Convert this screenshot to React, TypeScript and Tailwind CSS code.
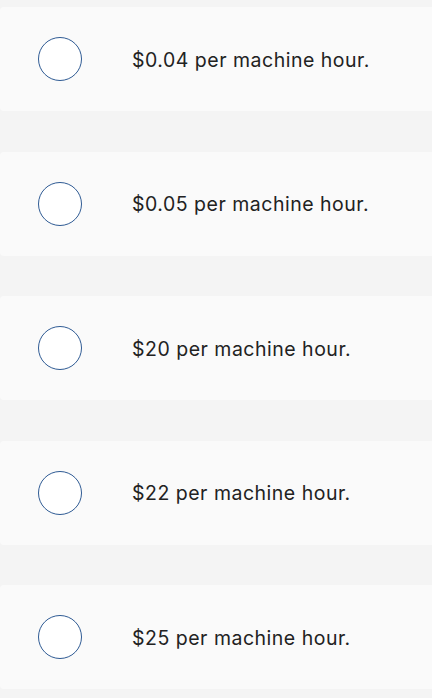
const options = [
  '$0.04 per machine hour.',
  '$0.05 per machine hour.',
  '$20 per machine hour.',
  '$22 per machine hour.',
  '$25 per machine hour.',
];

function OptionRow({ label }: { label: string }) {
  return (
    <label className="flex h-[104px] cursor-pointer items-center rounded-l-[4px] bg-[#fafafa]">
      {/* Radio */}
      <span className="ml-[38px] h-[44px] w-[44px] shrink-0 rounded-full border border-[#2f5b94] bg-white" />
      <span className="ml-[50px] mt-[3px] text-[19.5px] leading-none tracking-[0.5px] text-[#222222]">
        {label}
      </span>
    </label>
  );
}

export default function App() {
  return (
    <div
      className="min-h-[698px] w-full overflow-hidden bg-[#f4f4f4] pt-[7px]"
      style={{ fontFamily: 'Inter, "Open Sans", sans-serif' }}
    >
      <div className="flex flex-col gap-[40.5px]">
        {options.map(opt => (
          <OptionRow key={opt} label={opt} />
        ))}
      </div>
    </div>
  );
}
